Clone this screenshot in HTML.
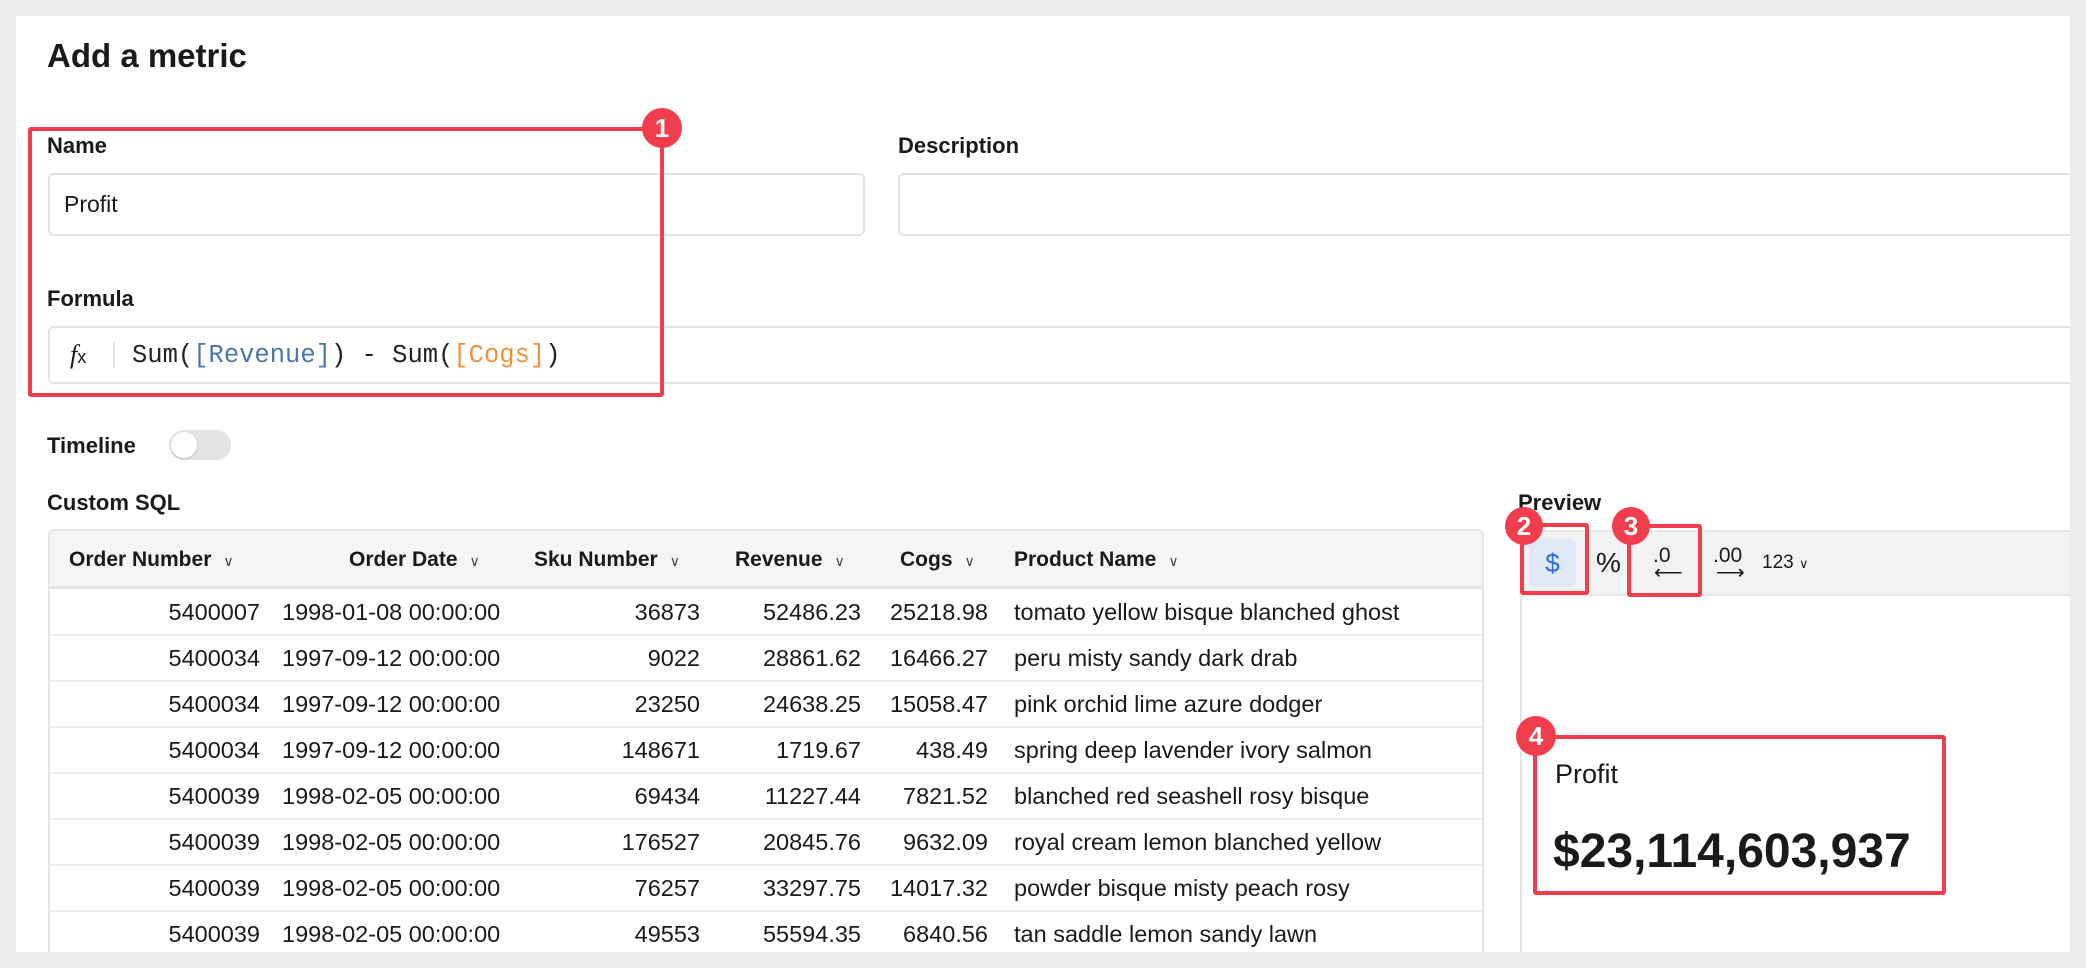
<!DOCTYPE html>
<html><head><meta charset="utf-8"><style>
*{margin:0;padding:0;box-sizing:border-box}
body{width:2086px;height:968px;background:#ebebeb;position:relative;overflow:hidden;font-family:"Liberation Sans",Arial,sans-serif;color:#1a1a1a}
.card{position:absolute;left:16px;top:16px;width:2054px;height:936px;background:#fff;overflow:hidden}
.a{position:absolute;white-space:nowrap}
.lbl{font-size:22px;font-weight:700;line-height:26px}
.input{position:absolute;border:2px solid #e2e2e2;border-radius:6px;background:#fff}
.red{position:absolute;border:4px solid #f23d4c;border-radius:3px}
.badge{position:absolute;width:40px;height:40px;border-radius:50%;background:#f23d4c;color:#fff;font-weight:700;font-size:26px;text-align:center;line-height:40px}
.th{position:absolute;top:32px;font-size:21px;font-weight:700;line-height:26px;white-space:nowrap}
.chev{font-weight:400;font-size:14px;color:#444;margin-left:12px}
.row{position:absolute;left:0;width:1436px;height:46px;border-bottom:2px solid #eee;font-size:23.5px;line-height:44px}
.row span{position:absolute;white-space:nowrap}
.r{text-align:right}
</style></head><body>
<div class="card">
 <div class="a" style="left:31px;top:20px;font-size:33px;font-weight:700;line-height:40px">Add a metric</div>

 <div class="a lbl" style="left:31px;top:117px">Name</div>
 <div class="input" style="left:32px;top:157px;width:817px;height:63px"></div>
 <div class="a" style="left:48px;top:173px;font-size:23px;line-height:30px">Profit</div>

 <div class="a lbl" style="left:882px;top:117px">Description</div>
 <div class="input" style="left:882px;top:157px;width:1200px;height:63px"></div>

 <div class="a lbl" style="left:31px;top:270px">Formula</div>
 <div class="input" style="left:32px;top:310px;width:2050px;height:58px"></div>
 <div class="a" style="left:54px;top:322px;font-family:'Liberation Serif',serif;font-style:italic;font-size:26px;line-height:34px">f<span style="font-style:normal;font-family:'Liberation Sans';font-size:18px">x</span></div>
 <div class="a" style="left:97px;top:326px;width:2px;height:26px;background:#e2e2e2"></div>
 <div class="a" style="left:116px;top:324px;font-family:'Liberation Mono',monospace;font-size:25.5px;line-height:32px;color:#222">Sum(<span style="color:#4a76a8">[Revenue]</span>) - Sum(<span style="color:#f0923a">[Cogs]</span>)</div>

 <div class="red" style="left:12px;top:111px;width:636px;height:270px"></div>
 <div class="badge" style="left:626px;top:92px">1</div>

 <div class="a lbl" style="left:31px;top:417px">Timeline</div>
 <div class="a" style="left:153px;top:414px;width:62px;height:30px;border-radius:15px;background:#e4e4e4"></div>
 <div class="a" style="left:155px;top:416px;width:26px;height:26px;border-radius:50%;background:#fff;box-shadow:0 1px 2px rgba(0,0,0,.2)"></div>

 <div class="a lbl" style="left:31px;top:474px">Custom SQL</div>

 <div class="a" style="left:32px;top:513px;width:1436px;height:440px;border:2px solid #e6e6e6;border-radius:6px;overflow:hidden">
  <div style="position:absolute;left:0;top:0;width:100%;height:58px;background:#f5f5f5;border-bottom:3px solid #e4e4e4"></div>
  <div class="th" style="left:19px;top:16px">Order Number<span class="chev">∨</span></div>
  <div class="th" style="left:299px;top:16px">Order Date<span class="chev">∨</span></div>
  <div class="th" style="left:484px;top:16px">Sku Number<span class="chev">∨</span></div>
  <div class="th" style="left:685px;top:16px">Revenue<span class="chev">∨</span></div>
  <div class="th" style="left:850px;top:16px">Cogs<span class="chev">∨</span></div>
  <div class="th" style="left:964px;top:16px">Product Name<span class="chev">∨</span></div>
  <div id="rows"></div>
 </div>

 <div class="a lbl" style="left:1502px;top:474px">Preview</div>
 <div class="a" style="left:1504px;top:514px;width:560px;height:66px;background:#f2f2f2;border-top:2px solid #e6e6e6;border-bottom:2px solid #e6e6e6"></div>
 <div class="a" style="left:1504px;top:580px;width:2px;height:360px;background:#e6e6e6"></div>
 <div class="a" style="left:1513px;top:523px;width:47px;height:48px;background:#e1e8f5;border-radius:6px;color:#2a6be0;font-size:26px;text-align:center;line-height:48px">$</div>
 <div class="a" style="left:1580px;top:530px;font-size:28px;line-height:34px">%</div>
 <div class="a" style="left:1637px;top:529px;font-size:21px;line-height:22px">.0</div>
 <div class="a" style="left:1638px;top:547px;font-size:20px;line-height:20px">⟵</div>
 <div class="a" style="left:1697px;top:529px;font-size:21px;line-height:22px">.00</div>
 <div class="a" style="left:1700px;top:547px;font-size:20px;line-height:20px">⟶</div>
 <div class="a" style="left:1746px;top:535px;font-size:19px;line-height:24px">123 <span style="font-size:13px">∨</span></div>

 <div class="red" style="left:1504px;top:507px;width:69px;height:72px"></div>
 <div class="badge" style="left:1489px;top:491px;width:38px;height:38px;line-height:38px">2</div>
 <div class="red" style="left:1611px;top:508px;width:75px;height:73px"></div>
 <div class="badge" style="left:1596px;top:491px;width:38px;height:38px;line-height:38px">3</div>

 <div class="a" style="left:1539px;top:741px;font-size:27px;line-height:34px">Profit</div>
 <div class="a" style="left:1537px;top:808px;font-size:48px;font-weight:700;line-height:56px">$23,114,603,937</div>
 <div class="red" style="left:1517px;top:719px;width:413px;height:160px"></div>
 <div class="badge" style="left:1500px;top:700px">4</div>
</div>
<script>
var d=[["5400007","1998-01-08 00:00:00","36873","52486.23","25218.98","tomato yellow bisque blanched ghost"],
["5400034","1997-09-12 00:00:00","9022","28861.62","16466.27","peru misty sandy dark drab"],
["5400034","1997-09-12 00:00:00","23250","24638.25","15058.47","pink orchid lime azure dodger"],
["5400034","1997-09-12 00:00:00","148671","1719.67","438.49","spring deep lavender ivory salmon"],
["5400039","1998-02-05 00:00:00","69434","11227.44","7821.52","blanched red seashell rosy bisque"],
["5400039","1998-02-05 00:00:00","176527","20845.76","9632.09","royal cream lemon blanched yellow"],
["5400039","1998-02-05 00:00:00","76257","33297.75","14017.32","powder bisque misty peach rosy"],
["5400039","1998-02-05 00:00:00","49553","55594.35","6840.56","tan saddle lemon sandy lawn"]];
var h="";
d.forEach(function(r,i){
h+='<div class="row" style="top:'+(59+i*46)+'px">'+
'<span class="r" style="right:1226px">'+r[0]+'</span>'+
'<span style="left:232px">'+r[1]+'</span>'+
'<span style="right:786px">'+r[2]+'</span>'+
'<span style="right:625px">'+r[3]+'</span>'+
'<span style="right:498px">'+r[4]+'</span>'+
'<span style="left:964px">'+r[5]+'</span></div>';});
document.getElementById("rows").innerHTML=h;
</script>
</body></html>
